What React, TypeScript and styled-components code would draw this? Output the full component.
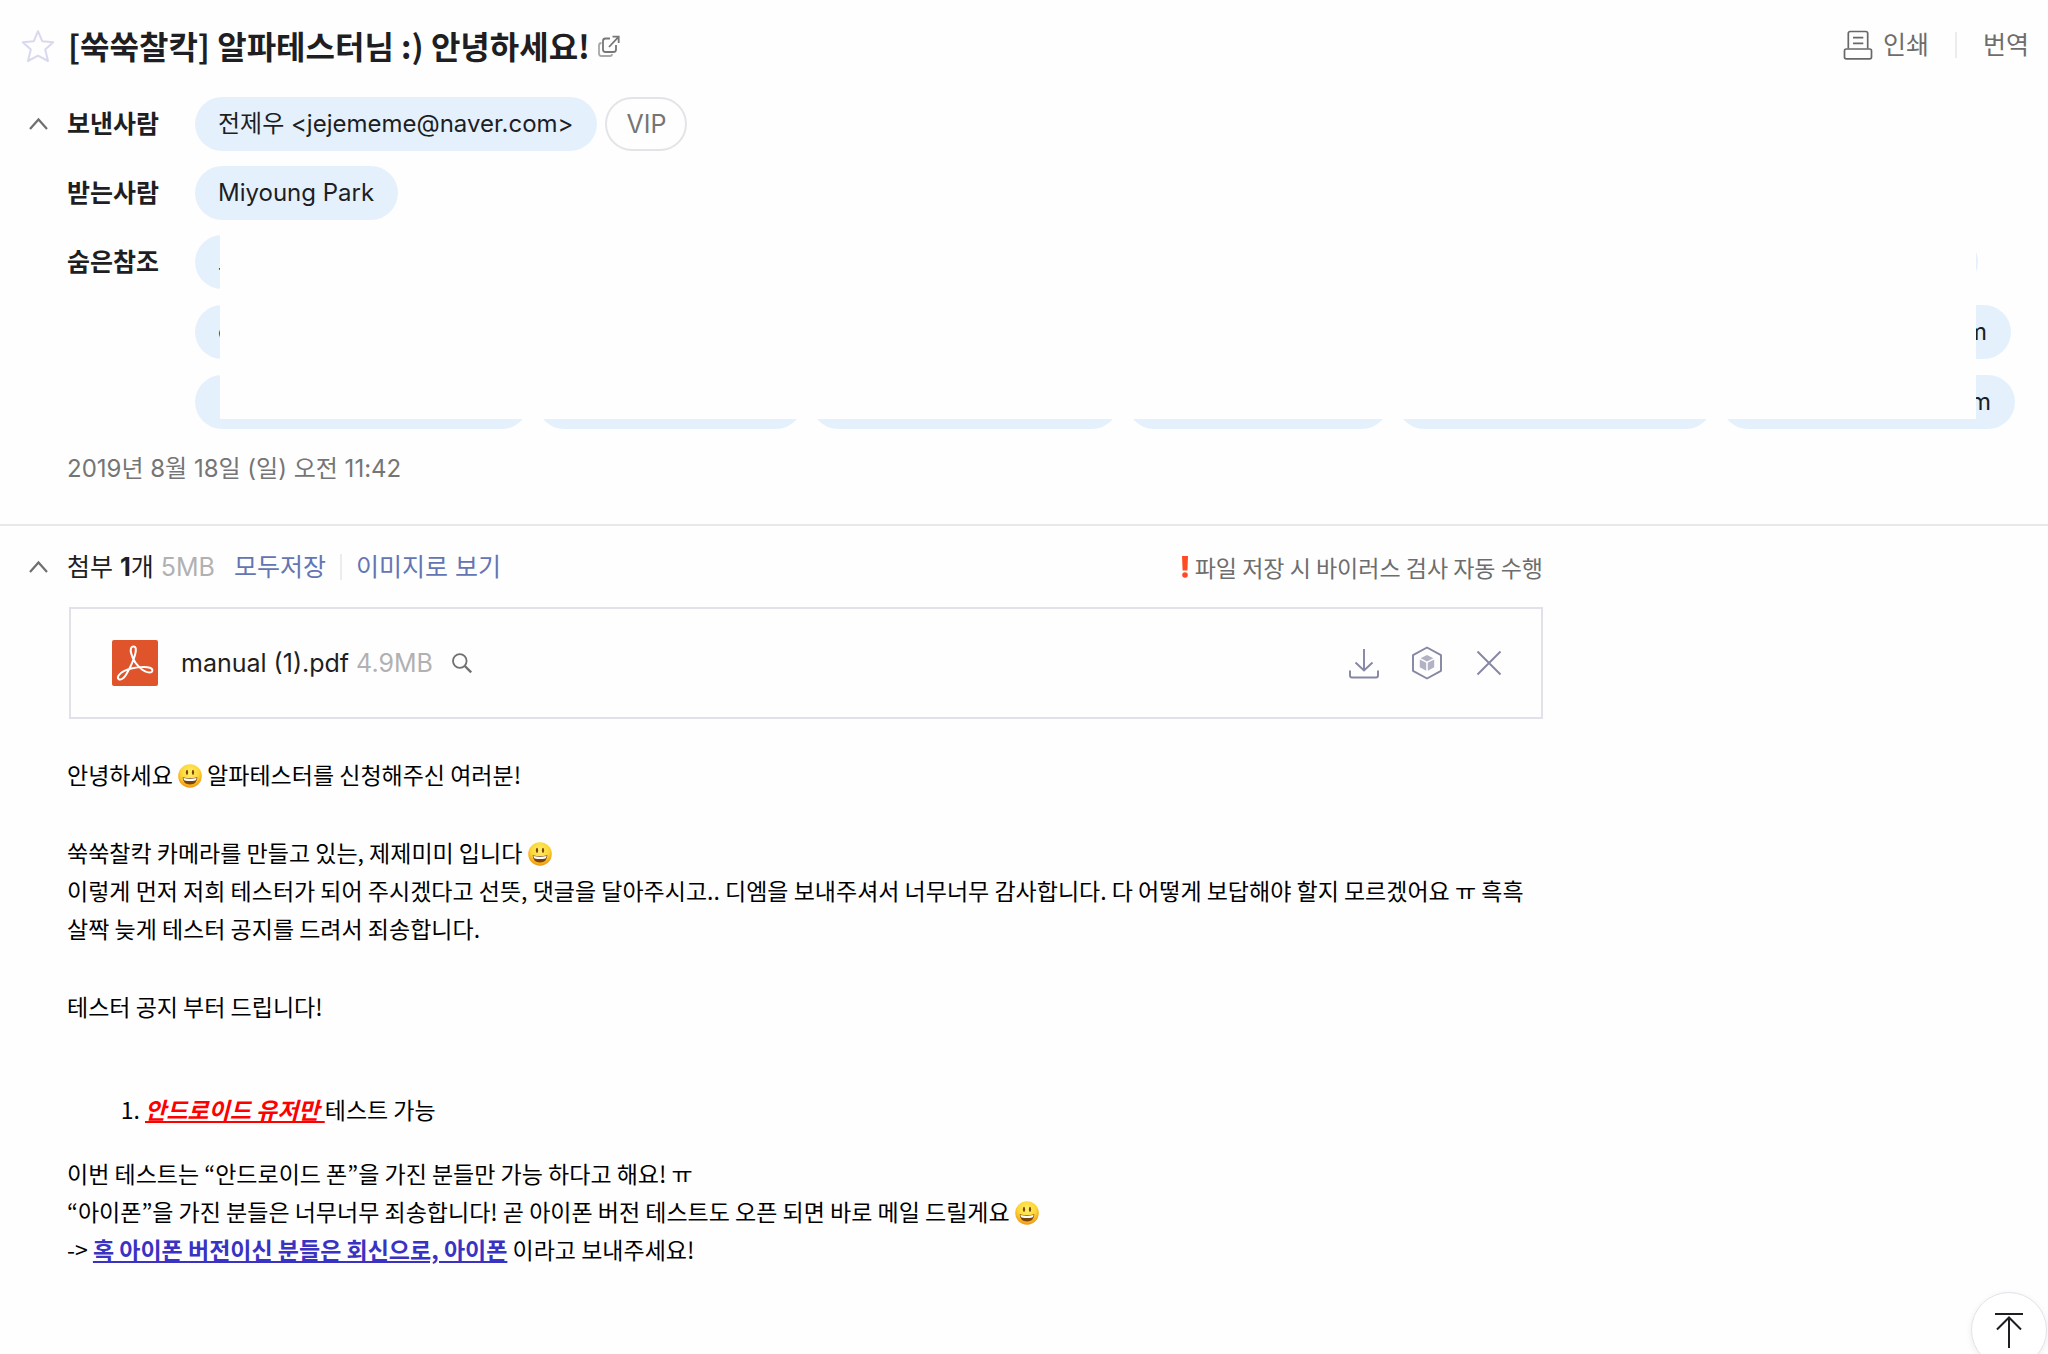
import React from "react";
import styled, { createGlobalStyle } from "styled-components";

const GlobalStyle = createGlobalStyle`
  *, *::before, *::after { box-sizing: border-box; }
  body {
    margin: 0;
    background: #fefefe;
    color: #1e1e23;
    font-family: Inter, "Noto Sans CJK KR", sans-serif;
    font-size: 25px;
    line-height: 38px;
  }
  button {
    margin: 0;
    padding: 0;
    border: 0;
    background: none;
    color: inherit;
    font: inherit;
    cursor: pointer;
  }
  svg { display: block; }
`;

const Page = styled.div`
  min-height: 100vh;
`;

const MailHeader = styled.header`
  padding: 22px 0 36px;
  border-bottom: 2px solid #e8e8e8;
`;

const TitleBar = styled.div`
  display: flex;
  align-items: center;
  gap: 6px;
  padding: 0 19px 0 20px;
  height: 46px;
  margin-bottom: 29px;
`;

const Subject = styled.h1`
  margin: 0;
  font-family: "Noto Sans CJK KR", sans-serif;
  font-size: 32px;
  line-height: 46px;
  font-weight: 700;
`;

const IconButton = styled.button`
  display: flex;
  align-items: center;
  justify-content: center;
  flex: none;
`;

const StarButton = styled(IconButton)`
  width: 42px;
  justify-content: flex-start;
`;

const HeaderTools = styled.div`
  display: flex;
  align-items: center;
  margin-left: auto;
  color: #6d6d6d;
`;

const ToolButton = styled.button`
  display: flex;
  align-items: center;
  gap: 10px;
`;

const Separator = styled.span<{ $gap: number }>`
  width: 2px;
  height: 26px;
  margin: 0 ${(p) => p.$gap}px;
  background: #ececec;
`;

const People = styled.dl`
  display: grid;
  grid-template-columns: 67px 128px minmax(0, 1fr);
  row-gap: 15px;
  margin: 0;
`;

const ToggleCell = styled.div`
  grid-column: 1;
  display: flex;
  align-items: center;
  height: 54px;
  padding-left: 28px;
`;

const PersonLabel = styled.dt`
  grid-column: 2;
  font-weight: 700;
  line-height: 54px;
`;

const PersonList = styled.dd`
  grid-column: 3;
  position: relative;
  display: flex;
  flex-direction: column;
  gap: 16px;
  margin: 0;
`;

const PillRow = styled.div`
  display: flex;
  gap: 8px;
`;

const Pill = styled.button<{ $width?: number }>`
  display: flex;
  justify-content: space-between;
  flex: none;
  height: 54px;
  padding: 0 24px 0 23px;
  width: ${(p) => (p.$width ? `${p.$width}px` : "auto")};
  border-radius: 27px;
  background: #e4f1fd;
  font-size: 24px;
  line-height: 54px;
`;

const VipButton = styled.button`
  height: 54px;
  padding: 0 19px;
  border: 2px solid #e4e4e8;
  border-radius: 27px;
  color: #757575;
`;

const Redaction = styled.div`
  position: absolute;
  inset: 0 72px 10px 25px;
  background: #fefefe;
`;

const SentDate = styled.time`
  display: block;
  padding: 21px 67px 0;
  color: #757575;
  font-size: 24px;
`;

const Content = styled.main`
  max-width: 1543px;
  padding: 20px 0 60px;
`;

const AttachBar = styled.div`
  display: flex;
  align-items: center;
  height: 42px;
  margin-bottom: 19px;
`;

const AttachToggle = styled(IconButton)`
  width: 67px;
  padding-left: 28px;
  justify-content: flex-start;
`;

const Size = styled.span`
  margin-left: 7px;
  color: #b1b1b3;
`;

const LinkButton = styled.button<{ $first?: boolean }>`
  margin-left: ${(p) => (p.$first ? 19 : 0)}px;
  color: #6475b4;
`;

const VirusNote = styled.span`
  display: flex;
  align-items: center;
  gap: 6px;
  margin-left: auto;
  font-family: "Noto Sans CJK KR", sans-serif;
  font-size: 23px;
  color: #6d6d6d;
`;

const FileCard = styled.div`
  display: flex;
  align-items: center;
  height: 112px;
  margin-left: 69px;
  padding: 0 36px 0 41px;
  border: 2px solid #e1e2e9;
`;

const FileName = styled.span`
  margin-left: 23px;
`;

const SearchButton = styled(IconButton)`
  margin-left: 18px;
`;

const FileTools = styled.div`
  display: flex;
  align-items: center;
  gap: 28px;
  margin-left: auto;
`;

const Message = styled.article`
  padding: 36px 0 0 67px;
  color: #000;
  font-family: "Noto Sans CJK KR", sans-serif;
  font-size: 23px;
  line-height: 38px;
`;

const Paragraph = styled.p`
  margin: 0 0 40px;
  white-space: nowrap;
`;

const Notice = styled.ol`
  margin: 65px 0 26px;
  padding-left: 78px;
`;

const Highlight = styled.em`
  color: #f00;
  font-weight: 700;
  text-decoration: underline;
`;

const ReplyLink = styled.a`
  color: #3a32c3;
  font-weight: 700;
`;

const Emoji = styled.svg`
  display: inline-block;
  width: 24px;
  height: 24px;
  vertical-align: -4px;
`;

const TopButton = styled.button`
  position: fixed;
  right: 1px;
  bottom: -14px;
  display: flex;
  justify-content: center;
  width: 76px;
  height: 76px;
  padding-top: 19px;
  border: 1px solid #e2e2e8;
  border-radius: 50%;
  background: #fff;
  box-shadow: 0 2px 6px rgba(40, 40, 90, 0.08);
`;

const Caret = () => (
  <svg width="20" height="14" viewBox="0 0 20 14" fill="none" stroke="#6f6f6f" strokeWidth="2.2">
    <path d="M2 12 10.500 2.500 19 12" />
  </svg>
);

const Smile = () => (
  <Emoji viewBox="0 0 24 24" role="img" aria-label="웃는 얼굴">
    <defs>
      <radialGradient id="face" cx="50%" cy="35%" r="65%">
        <stop offset="0" stopColor="#fff06a" />
        <stop offset="0.6" stopColor="#fdd535" />
        <stop offset="1" stopColor="#f0930f" />
      </radialGradient>
    </defs>
    <circle cx="12" cy="12" r="11.8" fill="url(#face)" />
    <ellipse cx="9" cy="8.3" rx="1.100" ry="2.6" fill="#7a4208" />
    <ellipse cx="15" cy="8.3" rx="1.100" ry="2.6" fill="#7a4208" />
    <path d="M4.6 13.2q7.4 1.8 14.8 0-.5 7.2-7.4 7.2t-7.4-7.2Z" fill="#7a4208" />
    <path d="M5.4 13.9q6.600 1.500 13.200 0-.2 2.300-1.300 2.600-5.300 1-10.600 0-1.100-.3-1.300-2.600Z" fill="#fff" />
  </Emoji>
);

const App = () => (
  <Page>
    <GlobalStyle />
    <MailHeader>
      <TitleBar>
        <StarButton aria-label="중요 메일">
          <svg width="36" height="36" viewBox="0 0 36 36" fill="none" stroke="#d8d9ee" strokeWidth="2" strokeLinejoin="round">
            <path d="M18 4.200 22.200 14.200 33.200 15.200 25.200 22.600 28 34 18 28.600 8 34 10.800 22.600 2.800 15.200 13.800 14.200Z" />
          </svg>
        </StarButton>
        <Subject>[쑥쑥찰칵] 알파테스터님 :) 안녕하세요!</Subject>
        <IconButton aria-label="새 창으로 보기">
          <svg width="26" height="26" viewBox="0 0 26 26" fill="none" stroke="#77777b" strokeWidth="1.800">
            <path d="M14 6.500H9.500Q7 6.500 7 9v8.500q0 2.500 2.500 2.500h8q2.500 0 2.500-2.500v-4.500" />
            <path d="M13 15 22.300 5.200M16.500 4.700H22.700V11" />
            <path d="M5.500 11Q3 11 3 13.500V21.500q0 2.500 2.500 2.500h8.500q2 0 2-2" stroke="#a8a8ab" />
          </svg>
        </IconButton>
        <HeaderTools>
          <ToolButton>
            <svg width="30" height="30" viewBox="0 0 30 30" fill="none" stroke="#68686b" strokeWidth="1.700">
              <path d="M5.300 18.500V3.500q0-2 2-2h15.400q2 0 2 2v15" />
              <rect x="1.500" y="19" width="27" height="9.800" rx="1.800" />
              <path d="M10 7.700h10.300M10 13.300h10.300" />
            </svg>
            인쇄
          </ToolButton>
          <Separator $gap={26} />
          <ToolButton>번역</ToolButton>
        </HeaderTools>
      </TitleBar>

      <People>
        <ToggleCell>
          <IconButton aria-label="받는사람 접기">
            <Caret />
          </IconButton>
        </ToggleCell>
        <PersonLabel>보낸사람</PersonLabel>
        <PersonList>
          <PillRow>
            <Pill>전제우 &lt;jejememe@naver.com&gt;</Pill>
            <VipButton>VIP</VipButton>
          </PillRow>
        </PersonList>
        <PersonLabel>받는사람</PersonLabel>
        <PersonList>
          <PillRow>
            <Pill>Miyoung Park</Pill>
          </PillRow>
        </PersonList>
        <PersonLabel>숨은참조</PersonLabel>
        <PersonList>
          <PillRow>
            <Pill $width={1783}>
              <span>조</span>
            </Pill>
          </PillRow>
          <PillRow>
            <Pill $width={1816}>
              <span>c</span>
              <span>m</span>
            </Pill>
          </PillRow>
          <PillRow>
            <Pill $width={334} />
            <Pill $width={266} />
            <Pill $width={308} />
            <Pill $width={262} />
            <Pill $width={316} />
            <Pill $width={294}>
              <span />
              <span>m</span>
            </Pill>
          </PillRow>
          <Redaction />
        </PersonList>
      </People>
      <SentDate dateTime="2019-08-18T11:42">2019년 8월 18일 (일) 오전 11:42</SentDate>
    </MailHeader>

    <Content>
      <AttachBar>
        <AttachToggle aria-label="첨부파일 접기">
          <Caret />
        </AttachToggle>
        <span>
          첨부 <b>1</b>개
        </span>
        <Size>5MB</Size>
        <LinkButton $first>모두저장</LinkButton>
        <Separator $gap={14} />
        <LinkButton>이미지로 보기</LinkButton>
        <VirusNote>
          <svg width="8" height="22" viewBox="0 0 8 22" fill="#ff4a22">
            <path d="M1 0h6l-.6 14.500H1.600Z" />
            <circle cx="4" cy="19" r="2.800" />
          </svg>
          파일 저장 시 바이러스 검사 자동 수행
        </VirusNote>
      </AttachBar>

      <FileCard>
        <svg width="46" height="46" viewBox="0 0 46 46" fill="none" stroke="#fff" strokeWidth="2">
          <rect width="46" height="46" rx="2" fill="#df542b" stroke="none" />
          <path d="M21.500 6.500c-2.800 0-3.200 3.300-2.400 6.600 1.300 5.600 5.100 12 11.200 16.700 3.200 2.400 9.200 4.100 10 1.100.7-3-4.400-4-9-3.900-7.400.2-14.500 1.600-19.400 4.100-4.600 2.300-7.300 6.100-5.300 7.900 1.800 1.700 5.500-.7 7.900-5 3.700-6.500 7.200-13.500 8.800-20.300.9-3.700 1-7.200-1.800-7.200Z" />
        </svg>
        <FileName>manual (1).pdf</FileName>
        <Size>4.9MB</Size>
        <SearchButton aria-label="미리보기">
          <svg width="22" height="22" viewBox="0 0 22 22" fill="none" stroke="#707070" strokeWidth="1.800">
            <circle cx="8.800" cy="9" r="6.800" />
            <path d="m13.800 14 6.400 6.400" strokeWidth="2.400" />
          </svg>
        </SearchButton>
        <FileTools>
          <IconButton aria-label="저장">
            <svg width="34" height="34" viewBox="0 0 34 34" fill="none" stroke="#8587a3" strokeWidth="1.900">
              <path d="M17 3v21M8.500 16.500 17 24.500l8.500-8" />
              <path d="M3 24.500v5q0 2 2 2h24q2 0 2-2v-5" />
            </svg>
          </IconButton>
          <IconButton aria-label="클라우드에 저장">
            <svg width="36" height="36" viewBox="0 0 36 36" fill="none" stroke="#8587a3" strokeWidth="1.900" strokeLinejoin="round">
              <path d="M18 2.500 32 10.200v15.600L18 33.500 4 25.800V10.200Z" />
              <g fill="#b1b2c4" stroke="none">
                <path d="m18 10 6.400 3.200L18 16.400l-6.400-3.200Z" />
                <path d="m10.800 14.500 6.400 3.200v8.100l-6.400-3.500ZM25.200 14.500l-6.400 3.200v8.100l6.400-3.500Z" />
              </g>
            </svg>
          </IconButton>
          <IconButton aria-label="삭제">
            <svg width="32" height="32" viewBox="0 0 32 32" fill="none" stroke="#8587a3" strokeWidth="1.900">
              <path d="m4.500 4.500 23 23M27.500 4.500l-23 23" />
            </svg>
          </IconButton>
        </FileTools>
      </FileCard>

      <Message>
        <Paragraph>
          안녕하세요 <Smile /> 알파테스터를 신청해주신 여러분!
        </Paragraph>
        <Paragraph>
          쑥쑥찰칵 카메라를 만들고 있는, 제제미미 입니다 <Smile />
          <br />
          이렇게 먼저 저희 테스터가 되어 주시겠다고 선뜻, 댓글을 달아주시고.. 디엠을 보내주셔서 너무너무 감사합니다. 다 어떻게 보답해야 할지 모르겠어요 ㅠ 흑흑
          <br />
          살짝 늦게 테스터 공지를 드려서 죄송합니다.
        </Paragraph>
        <Paragraph>테스터 공지 부터 드립니다!</Paragraph>
        <Notice>
          <li>
            <Highlight>안드로이드 유저만 </Highlight>테스트 가능
          </li>
        </Notice>
        <Paragraph>
          이번 테스트는 “안드로이드 폰”을 가진 분들만 가능 하다고 해요! ㅠ
          <br />
          “아이폰”을 가진 분들은 너무너무 죄송합니다! 곧 아이폰 버전 테스트도 오픈 되면 바로 메일 드릴게요 <Smile />
          <br />
          -&gt; <ReplyLink href="#reply">혹 아이폰 버전이신 분들은 회신으로, 아이폰</ReplyLink> 이라고 보내주세요!
        </Paragraph>
      </Message>
    </Content>

    <TopButton aria-label="맨 위로">
      <svg width="32" height="38" viewBox="0 0 32 38" fill="none" stroke="#1e1e23" strokeWidth="2">
        <path d="M2 2h28M16 36V6M4 17.500 16 5.500l12 12" />
      </svg>
    </TopButton>
  </Page>
);

export default App;
